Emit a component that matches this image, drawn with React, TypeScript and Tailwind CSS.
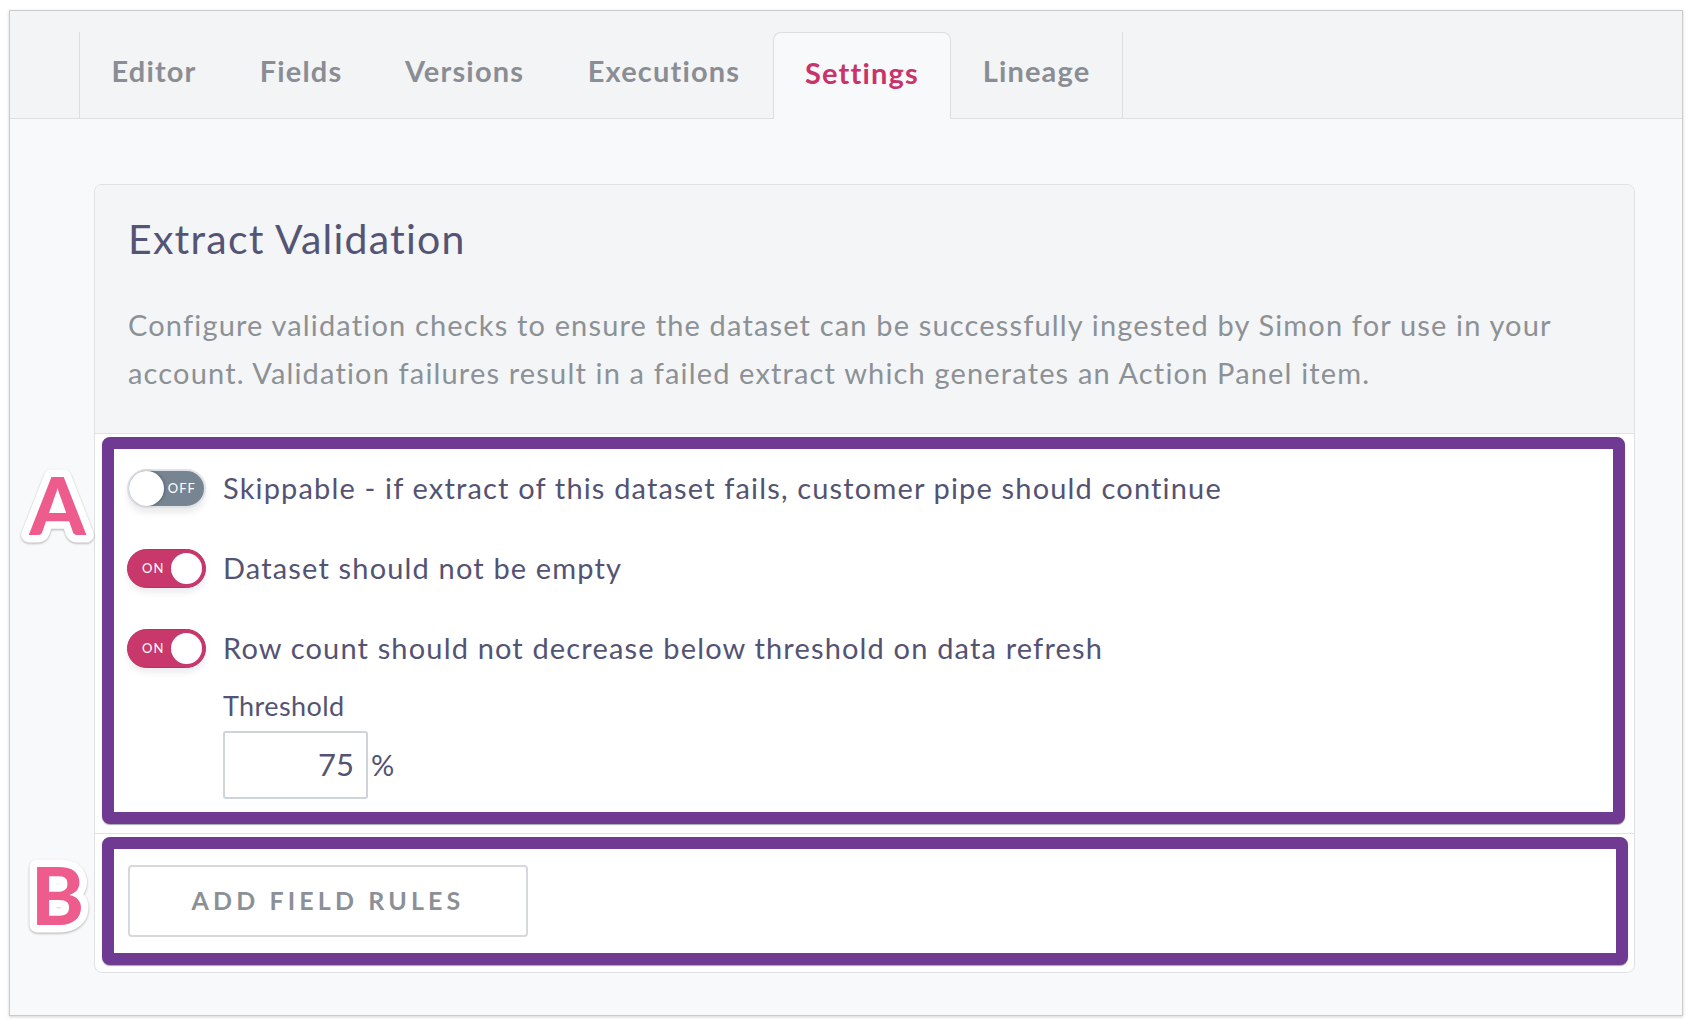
import React from "react";

function Toggle({ on }: { on: boolean }) {
  if (on) {
    return (
      <div className="flex h-[39px] w-[79px] shrink-0 items-center justify-between rounded-full border border-[#b93262] bg-[#c8386b] pl-[14px] pr-[1px] shadow-[0_5px_6px_rgba(0,0,0,0.07)]">
        <span className="text-[13px] leading-none tracking-[0.08em] text-white">ON</span>
        <span className="h-[35px] w-[35px] rounded-full border-2 border-[#c8386b] bg-white"></span>
      </div>
    );
  }
  return (
    <div className="flex h-[39px] w-[79px] shrink-0 items-center justify-between rounded-full border-2 border-[#dfe2e6] bg-[#778492] pl-0 pr-[8px] shadow-[0_5px_6px_rgba(0,0,0,0.08)]">
      <span className="h-[35px] w-[35px] rounded-full bg-white shadow-[1px_0_3px_rgba(0,0,0,0.25)]"></span>
      <span className="text-[13px] leading-none tracking-[0.08em] text-white">OFF</span>
    </div>
  );
}

function Sticker({ letter }: { letter: string }) {
  return (
    <svg width="100" height="110" overflow="visible" className="drop-shadow-[0_1px_1px_rgba(0,0,0,0.3)]">
      <text
        x="44.5"
        y="80"
        textAnchor="middle"
        fontSize="80"
        fontWeight="900"
        fontFamily="Lato, 'Open Sans', sans-serif"
        fill="#ee5c8e"
        stroke="#ffffff"
        strokeWidth="15"
        strokeLinejoin="round"
        paintOrder="stroke"
      >
        {letter}
      </text>
    </svg>
  );
}

const tabs = [
  { label: "Editor", w: "w-[148px]" },
  { label: "Fields", w: "w-[146px]" },
  { label: "Versions", w: "w-[181px]" },
  { label: "Executions", w: "w-[218px]" },
  { label: "Settings", w: "w-[178px]", active: true },
  { label: "Lineage", w: "w-[171px]" },
];

const bodyText = "text-[29px] leading-[1.2] tracking-[0.04em] text-[#545373]";

export default function App() {
  return (
    <div className="h-[1026px] w-[1692px] overflow-hidden bg-white pl-[9px] pt-[10px] font-['Lato',sans-serif]">
      <div className="relative flex h-[1006px] w-[1674px] flex-col border border-[#cbcbcb] bg-[#f8f9fb] shadow-[0_1px_3px_rgba(0,0,0,0.18)]">
        {/* Tab bar */}
        <div className="flex h-[108px] shrink-0 items-end border-b border-[#dcdee1] bg-[#f3f4f6] pl-[69px]">
          <div className="flex h-[86px] border-l border-r border-[#dcdee1]">
            {tabs.map((t) =>
              t.active ? (
                <div
                  key={t.label}
                  className={`${t.w} relative z-10 mb-[-1px] flex h-[87px] items-center justify-center rounded-t-[8px] border border-b-0 border-[#dcdee1] bg-[#f8f9fb] pb-[6px] text-[29px] font-bold tracking-[0.04em] text-[#c8336a]`}
                >
                  {t.label}
                </div>
              ) : (
                <div
                  key={t.label}
                  className={`${t.w} flex h-[86px] items-center justify-center pb-[8px] text-[29px] font-bold tracking-[0.04em] text-[#8a8e94]`}
                >
                  {t.label}
                </div>
              )
            )}
          </div>
        </div>

        {/* Content */}
        <div className="flex-1 pb-[44px] pl-[84px] pr-[47px] pt-[65px]">
          <div className="overflow-hidden rounded-[8px] border border-[#dfe1e4] bg-white">
            {/* Header */}
            <div className="border-b border-[#e0e2e5] bg-[#f4f5f7] pb-[36px] pl-[33px] pr-[33px] pt-[29px]">
              <h1 className="text-[41px] font-normal leading-[1.2] tracking-[0.03em] text-[#545475]">Extract Validation</h1>
              <p className="mt-[38px] text-[29px] leading-[48px] tracking-[0.04em] text-[#8c9196]">
                Configure validation checks to ensure the dataset can be successfully ingested by Simon for use in your
                <br />
                account. Validation failures result in a failed extract which generates an Action Panel item.
              </p>
            </div>

            {/* Section A */}
            <div className="relative pb-[9px] pl-[7px] pr-[9px] pt-[3px]">
              <div className="rounded-[8px] border-[12px] border-[#6e3a92] bg-white pb-[13px] pl-[13px] pt-[20px] shadow-[0_1px_1px_rgba(0,0,0,0.35)]">
                <div className="flex flex-col gap-[41px]">
                  <div className="flex items-center gap-[17px]">
                    <Toggle on={false} />
                    <span className={bodyText}>
                      Skippable - if extract of this dataset fails, customer pipe should continue
                    </span>
                  </div>
                  <div className="flex items-center gap-[17px]">
                    <Toggle on={true} />
                    <span className={bodyText}>Dataset should not be empty</span>
                  </div>
                  <div className="flex items-center gap-[17px]">
                    <Toggle on={true} />
                    <span className={bodyText}>Row count should not decrease below threshold on data refresh</span>
                  </div>
                </div>
                <div className="ml-[96px] mt-[22px]">
                  <div className="text-[27px] leading-[1.2] tracking-[0.015em] text-[#545373]">Threshold</div>
                  <div className="mt-[8px] flex items-center">
                    <div className="flex h-[68px] w-[145px] items-center justify-end rounded-[3px] border-2 border-[#cfd4d8] bg-white pr-[12px] text-[31px] text-[#545373]">
                      75
                    </div>
                    <span className="ml-[3px] text-[29px] text-[#545373]">%</span>
                  </div>
                </div>
              </div>
            </div>

            {/* Section B */}
            <div className="border-t border-[#e0e2e5] pb-[7px] pl-[7px] pr-[6px] pt-[3px]">
              <div className="rounded-[8px] border-[12px] border-[#6e3a92] bg-white pb-[16px] pl-[14px] pt-[16px] shadow-[0_1px_1px_rgba(0,0,0,0.35)]">
                <button className="flex h-[72px] w-[400px] items-center justify-center rounded-[4px] border-2 border-[#d5d8dc] bg-white text-[25px] font-bold tracking-[0.165em] text-[#8b9097]">
                  ADD FIELD RULES
                </button>
              </div>
            </div>
          </div>
        </div>

        {/* Annotation stickers */}
        <div className="absolute left-[3px] top-[444px]">
          <Sticker letter="A" />
        </div>
        <div className="absolute left-[3px] top-[834px]">
          <Sticker letter="B" />
        </div>
      </div>
    </div>
  );
}
